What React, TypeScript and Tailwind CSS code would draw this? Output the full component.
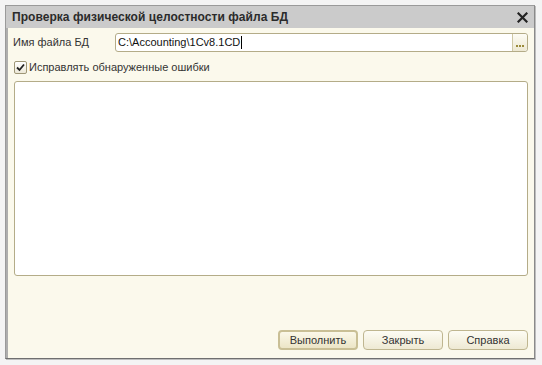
export default function App() {
  return (
    <div
      className="w-[542px] h-[365px] bg-[#f4f4f4] pt-[5px] pl-[5px]"
      style={{ fontFamily: '"Liberation Sans", Arial, sans-serif' }}
    >
      <div className="w-[530px] h-[354px] flex flex-col border border-[#9a9a9a] border-b-[#6f6f6f] border-r-[#8a8a8a] shadow-[1px_1px_0_#bdbdbd]">
        {/* title bar */}
        <div className="h-[22px] bg-[#cbcbcb] flex items-center justify-between pl-[6px] pr-[6px]">
          <span className="text-[12px] font-bold text-[#2b2b2b] tracking-[0.05px]">
            Проверка физической целостности файла БД
          </span>
          <svg width="11" height="11" viewBox="0 0 11 11">
            <path d="M1.5 1.5 L9.5 9.5 M9.5 1.5 L1.5 9.5" stroke="#222" strokeWidth="2.2" strokeLinecap="square" />
          </svg>
        </div>

        {/* body */}
        <div className="flex-1 bg-[#fbf9ec] border-l-2 border-[#aeaeae] flex flex-col pl-[5px] pr-[6px] pt-[5px] pb-[7px] text-[11px] text-[#333]">
          <div className="flex items-center h-[19px]">
            <span className="w-[102px]">Имя файла БД</span>
            <div className="flex-1 h-[19px] flex bg-white border border-[#b4ac88] rounded-[3px]">
              <div className="flex-1 flex items-center pl-[2px] text-[#111]">
                C:\Accounting\1Cv8.1CD
                <span className="w-px h-[13px] bg-black ml-px" />
              </div>
              <div className="w-[15px] border-l border-[#cfc8a6] bg-gradient-to-b from-[#fdfcf5] to-[#ede8d2] rounded-r-[3px] flex items-end justify-center pb-[4px] gap-[1px]">
                <span className="w-[2px] h-[2px] bg-[#9a8a3a]" />
                <span className="w-[2px] h-[2px] bg-[#9a8a3a]" />
                <span className="w-[2px] h-[2px] bg-[#9a8a3a]" />
              </div>
            </div>
          </div>

          <label className="flex items-center mt-[9px] h-[13px]">
            <span className="w-[13px] h-[13px] ml-px border border-[#9e9677] rounded-[2px] bg-gradient-to-b from-white to-[#ece8d8] flex items-center justify-center">
              <svg width="9" height="9" viewBox="0 0 9 9">
                <path d="M1 4.5 L3.5 7 L8 1.5" fill="none" stroke="#222" strokeWidth="1.8" />
              </svg>
            </span>
            <span className="ml-[2px]">Исправлять обнаруженные ошибки</span>
          </label>

          <div className="mt-[7px] h-[195px] bg-white border border-[#b4ac88] rounded-[3px] ml-px" />

          <div className="flex-1" />

          <div className="flex justify-end gap-[5px] mb-[1px]">
            <button className="w-[80px] h-[20px] rounded-[4px] border-2 border-[#c9bf95] bg-gradient-to-b from-[#fbf8e9] to-[#ece5c6] text-[11px] text-[#333] leading-none">
              Выполнить
            </button>
            <button className="w-[80px] h-[20px] rounded-[4px] border border-[#bfb690] bg-gradient-to-b from-[#fdfcf4] to-[#eee9d3] text-[11px] text-[#333] leading-none">
              Закрыть
            </button>
            <button className="w-[80px] h-[20px] rounded-[4px] border border-[#bfb690] bg-gradient-to-b from-[#fdfcf4] to-[#eee9d3] text-[11px] text-[#333] leading-none">
              Справка
            </button>
          </div>
        </div>
      </div>
    </div>
  );
}
